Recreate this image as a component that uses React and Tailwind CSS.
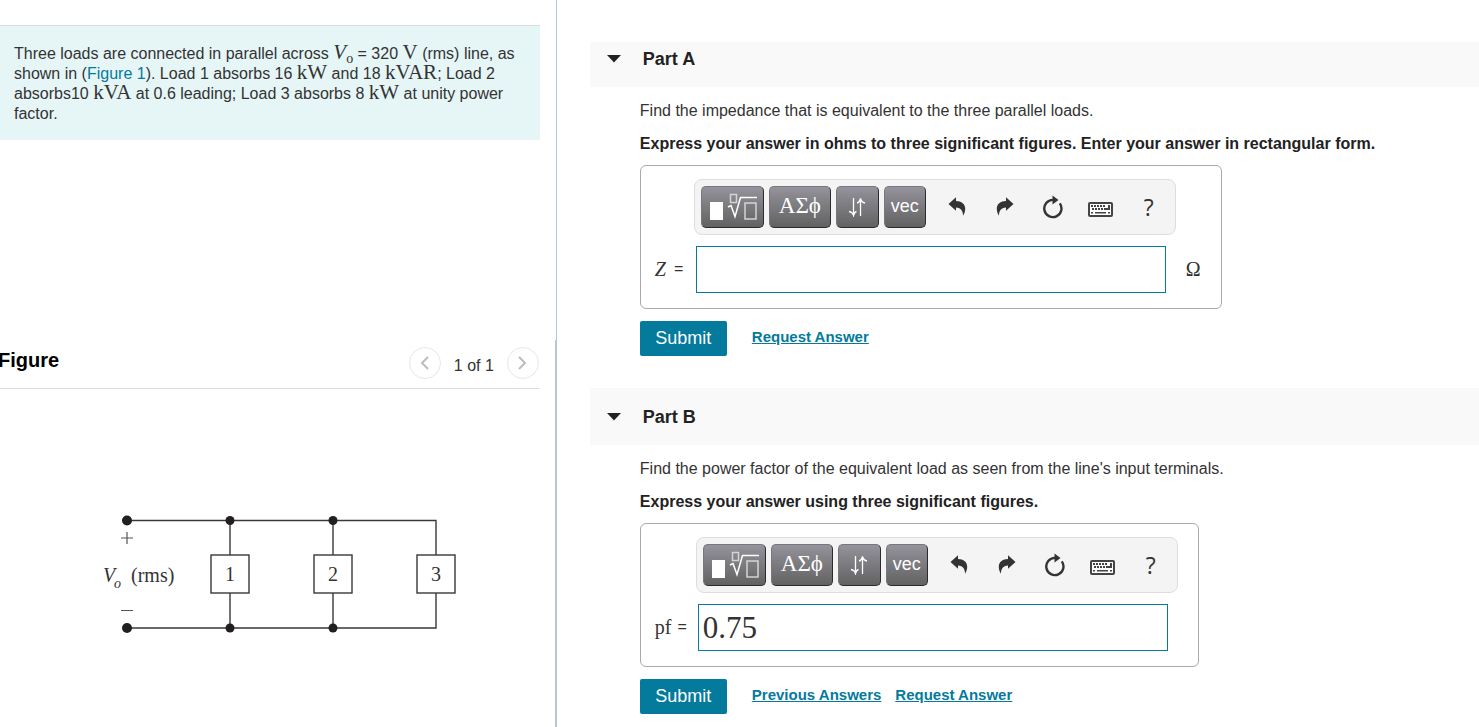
import { useState } from "react";

const UndoIcon = ({ className = "" }) => (
  <svg className={className} width="18" height="20" viewBox="0 0 18 20" fill="#333333" aria-hidden="true">
    <path d="M0.5 7 L8 0.2 V4 C13.500 4 17.400 7 17.200 12 C17.100 14.800 16.300 17 15 18.800 C15.200 14.300 13 10.600 8 10.400 V13.800 Z" />
  </svg>
);

const ResetIcon = () => (
  <svg width="22" height="24" viewBox="0 0 22 24" aria-hidden="true">
    <path d="M17.8 8.400 A8.600 8.600 0 1 1 11 4.900" fill="none" stroke="#333333" strokeWidth="2.400" />
    <path d="M10.500 0.500 L16.500 5 L10.500 9.500 Z" fill="#333333" />
  </svg>
);

const keyRows = [
  [3, 3],
  [4, 6]
];

const KeyboardIcon = () => (
  <svg width="25" height="15" viewBox="0 0 25 15" aria-hidden="true">
    <rect x="1" y="1" width="23" height="13" rx="1" fill="#ffffff" stroke="#444444" strokeWidth="2" />
    {keyRows.map(([x, y]) =>
      [0, 1, 2, 3, 4].map((i) => <rect key={`${y}-${i}`} x={x + i * 3} y={y} width="2" height="2" fill="#444444" />)
    )}
    <path d="M20 3h2v5h-4v-2h2z" fill="#444444" />
    <rect x="3" y="10" width="2" height="1.500" fill="#444444" />
    <rect x="7" y="10" width="11" height="1.500" fill="#444444" />
    <rect x="20" y="10" width="2" height="1.500" fill="#444444" />
  </svg>
);

const TemplatesIcon = () => (
  <svg width="51" height="28" viewBox="0 0 51 28" aria-hidden="true">
    <rect x="3" y="9" width="13" height="18" fill="#ffffff" />
    <rect x="23.500" y="1.500" width="6" height="8" fill="none" stroke="#d4d4d4" strokeWidth="1.500" />
    <path d="M21 14 L24 12.500 L28 23.500 L33.500 4.500 H50" fill="none" stroke="#ffffff" strokeWidth="1.500" />
    <rect x="38" y="10" width="11" height="16" fill="none" stroke="#d4d4d4" strokeWidth="1.500" />
  </svg>
);

const ArrowsIcon = () => (
  <svg width="18" height="20" viewBox="0 0 18 20" fill="none" stroke="#ffffff" strokeWidth="1.300" aria-hidden="true">
    <path d="M5.500 1v17M1 14.500q3.500 0.500 4.500 4q1-3.500 3-4" />
    <path d="M12.500 19V2M9 6q2.500-0.500 3.500-4.500q1 4 4.500 4.500" />
  </svg>
);

const Chevron = ({ className = "" }) => (
  <svg className={className} width="9" height="14" viewBox="0 0 9 14" fill="none" stroke="#bdbdbd" strokeWidth="2" aria-hidden="true">
    <path d="M8 1L2 7l6 6" />
  </svg>
);

const darkButton =
  "h-[42px] flex items-center justify-center rounded-[5px] border border-t-[#77777c] border-l-[#77777c] border-r-[#2b2b2b] border-b-[#2b2b2b] bg-linear-to-b from-[#95939c] to-[#626262] text-white";
const plainButton = "h-[42px] w-12 flex items-center justify-center text-[#333333]";

const Toolbar = () => (
  <div className="flex h-14 w-[482px] items-center rounded-lg border border-[#dddddd] bg-[#f4f4f4] pl-1.5">
    <div className="flex gap-[5px]">
      <button type="button" aria-label="Templates" className={`${darkButton} w-[63px]`}>
        <TemplatesIcon />
      </button>
      <button type="button" className={`${darkButton} w-[62px] pb-0.5 font-['Liberation_Serif',serif] text-[23px]`}>
        ΑΣϕ
      </button>
      <button type="button" aria-label="Subscript and superscript" className={`${darkButton} w-[43px]`}>
        <ArrowsIcon />
      </button>
      <button type="button" className={`${darkButton} w-[42px] pb-0.5 text-lg`}>
        vec
      </button>
    </div>
    <div className="ml-[7px] flex">
      <button type="button" aria-label="Undo" className={plainButton}>
        <UndoIcon />
      </button>
      <button type="button" aria-label="Redo" className={plainButton}>
        <UndoIcon className="-scale-x-100" />
      </button>
      <button type="button" aria-label="Reset" className={plainButton}>
        <ResetIcon />
      </button>
      <button type="button" aria-label="Keyboard shortcuts" className={`${plainButton} pt-1`}>
        <KeyboardIcon />
      </button>
      <button type="button" aria-label="Help" className={`${plainButton} font-['Open_Sans',sans-serif] text-[23px]`}>
        ?
      </button>
    </div>
  </div>
);

const Part = ({ id, title, headerClass, question, instruction, label, boxClass, labelClass, unit, initial, links }) => {
  const [value, setValue] = useState(initial);

  return (
    <section>
      <h2 className={`flex bg-[#f9f9f9] pl-[17px] text-lg leading-6 font-bold text-[#222222] ${headerClass}`}>
        <button type="button" className="flex items-center gap-[22px]">
          <svg width="14" height="8" viewBox="0 0 14 8" fill="#222222" aria-hidden="true">
            <path d="M0 0h14L7 7.500z" />
          </svg>
          {title}
        </button>
      </h2>
      <form className="pt-3.5 pl-[50px]" onSubmit={(e) => e.preventDefault()}>
        <p className="leading-5">{question}</p>
        <p className="mt-[13px] leading-5 font-bold text-[#222222]">{instruction}</p>
        <div className={`mt-[11px] flex h-36 rounded-md border border-[#aaaaaa] pt-[13px] ${boxClass}`}>
          <label htmlFor={id} className={`flex h-[114px] shrink-0 items-end pb-3 pl-3.5 whitespace-nowrap ${labelClass}`}>
            {label}
          </label>
          <div>
            <Toolbar />
            <input
              id={id}
              type="text"
              value={value}
              onChange={(e) => setValue(e.target.value)}
              className="mt-[11px] ml-0.5 block h-[47px] w-[470px] border border-[#047a9c] bg-white px-1 font-['Liberation_Serif',serif] text-[31px] text-[#333333] outline-none"
            />
          </div>
          {unit && <span className="ml-2.5 flex h-[114px] items-end pb-3 font-['Liberation_Serif',serif] text-xl leading-6">{unit}</span>}
        </div>
        <div className="mt-3 flex items-center">
          <button type="submit" className="h-[35px] w-[87px] rounded-xs bg-[#047a9c] pb-0.5 text-lg text-white">
            Submit
          </button>
          <div className="ml-[25px] flex gap-3.5 pb-0.5 text-[15px] font-bold text-[#047a9c]">
            {links.map((link) => (
              <a key={link} href="#" className="underline">
                {link}
              </a>
            ))}
          </div>
        </div>
      </form>
    </section>
  );
};

const Unit = ({ children }) => (
  <span className="font-['Liberation_Serif',serif] text-[21px] leading-4">{children}</span>
);

const loads = [
  { name: "1", x: 140 },
  { name: "2", x: 243 },
  { name: "3", x: 346 }
];

const Circuit = () => (
  <svg width="390" height="130" viewBox="0 0 390 130" role="img" aria-label="Three parallel loads" fontFamily="Liberation Serif, serif" fontSize="20" fill="#333333">
    <g fill="none" stroke="#3a3839" strokeWidth="1.400">
      <path d="M37 10.500H346V118H37" />
      <path d="M140 10V118M243 10V118" />
    </g>
    {[37, 140, 243].map((x) => (
      <g key={x} fill="#231f20">
        <circle cx={x} cy="10.500" r={x === 37 ? 5 : 4.5} />
        <circle cx={x} cy="118" r={x === 37 ? 5 : 4.5} />
      </g>
    ))}
    {loads.map(({ name, x }) => (
      <g key={name}>
        <rect x={x - 19} y="45" width="38" height="38" fill="#ffffff" stroke="#3a3839" strokeWidth="1.400" />
        <text x={x} y="71" textAnchor="middle">
          {name}
        </text>
      </g>
    ))}
    <path d="M31 28H43M37 22V34M31 100.500H43" stroke="#555555" strokeWidth="1.200" />
    <text x="13" y="72" fontStyle="italic">
      V
    </text>
    <text x="24" y="78" fontStyle="italic" fontSize="14">
      o
    </text>
    <text x="41" y="72">
      (rms)
    </text>
  </svg>
);

const App = () => {
  return (
    <div className="flex min-h-screen bg-white font-['Liberation_Sans',Arial,sans-serif] text-base text-[#333333]">
      <aside className="flex w-[37.65%] shrink-0 flex-col">
        <div className="min-h-[340px] border-r border-[#b8c7d6] pt-[25px] pr-4">
          <div className="border-t border-[#d5dfe2] bg-[#e6f6f7] pt-[18px] pr-2 pb-4 pl-3.5 leading-5">
            <p>
              Three loads are connected in parallel across{" "}
              <span className="font-['Liberation_Serif',serif] text-[21px] leading-4">
                <i>V</i>
                <sub className="text-sm leading-none">o</sub>
              </span>{" "}
              = 320 <Unit>V</Unit> (rms) line, as shown in (
              <a href="#figure" className="text-[#047a9c]">
                Figure 1
              </a>
              ). Load 1 absorbs 16 <Unit>kW</Unit> and 18 <Unit>kVAR</Unit>; Load 2 absorbs10 <Unit>kVA</Unit> at 0.6
              leading; Load 3 absorbs 8 <Unit>kW</Unit> at unity power factor.
            </p>
          </div>
        </div>
        <div id="figure" className="flex-1 border-r-2 border-[#b8c7d6] pr-4">
          <div className="flex h-[49px] items-center justify-between border-b border-[#dddddd]">
            <h3 className="-ml-0.5 pb-2 text-xl font-bold text-black">Figure</h3>
            <div className="flex items-center pb-0.5">
              <button type="button" aria-label="Previous figure" className="flex size-8 items-center justify-center rounded-full border border-[#e7e7e7]">
                <Chevron />
              </button>
              <span className="px-[13px] pt-1.5">1 of 1</span>
              <button type="button" aria-label="Next figure" className="flex size-8 items-center justify-center rounded-full border border-[#e7e7e7]">
                <Chevron className="-scale-x-100" />
              </button>
            </div>
          </div>
          <div className="pt-[121px] pl-[90px]">
            <Circuit />
          </div>
        </div>
      </aside>
      <main className="flex min-w-0 flex-1 flex-col gap-8 pt-[42px] pl-[33px]">
        <Part
          id="impedance"
          title="Part A"
          headerClass="pt-[5px] pb-4"
          question="Find the impedance that is equivalent to the three parallel loads."
          instruction="Express your answer in ohms to three significant figures. Enter your answer in rectangular form."
          label={
            <>
              <i className="font-['Liberation_Serif',serif] text-xl leading-6">Z</i>
              <span className="pl-2 leading-6">=</span>
            </>
          }
          boxClass="w-[582px]"
          labelClass="w-[53px]"
          unit="Ω"
          initial=""
          links={["Request Answer"]}
        />
        <Part
          id="power-factor"
          title="Part B"
          headerClass="pt-[17px] pb-4"
          question="Find the power factor of the equivalent load as seen from the line's input terminals."
          instruction="Express your answer using three significant figures."
          label={
            <>
              <span className="font-['Liberation_Serif',serif] text-xl leading-6">pf</span>
              <span className="pl-1.5 leading-6">=</span>
            </>
          }
          boxClass="w-[559px]"
          labelClass="w-[55px]"
          initial="0.75"
          links={["Previous Answers", "Request Answer"]}
        />
      </main>
    </div>
  );
};

export default App;
